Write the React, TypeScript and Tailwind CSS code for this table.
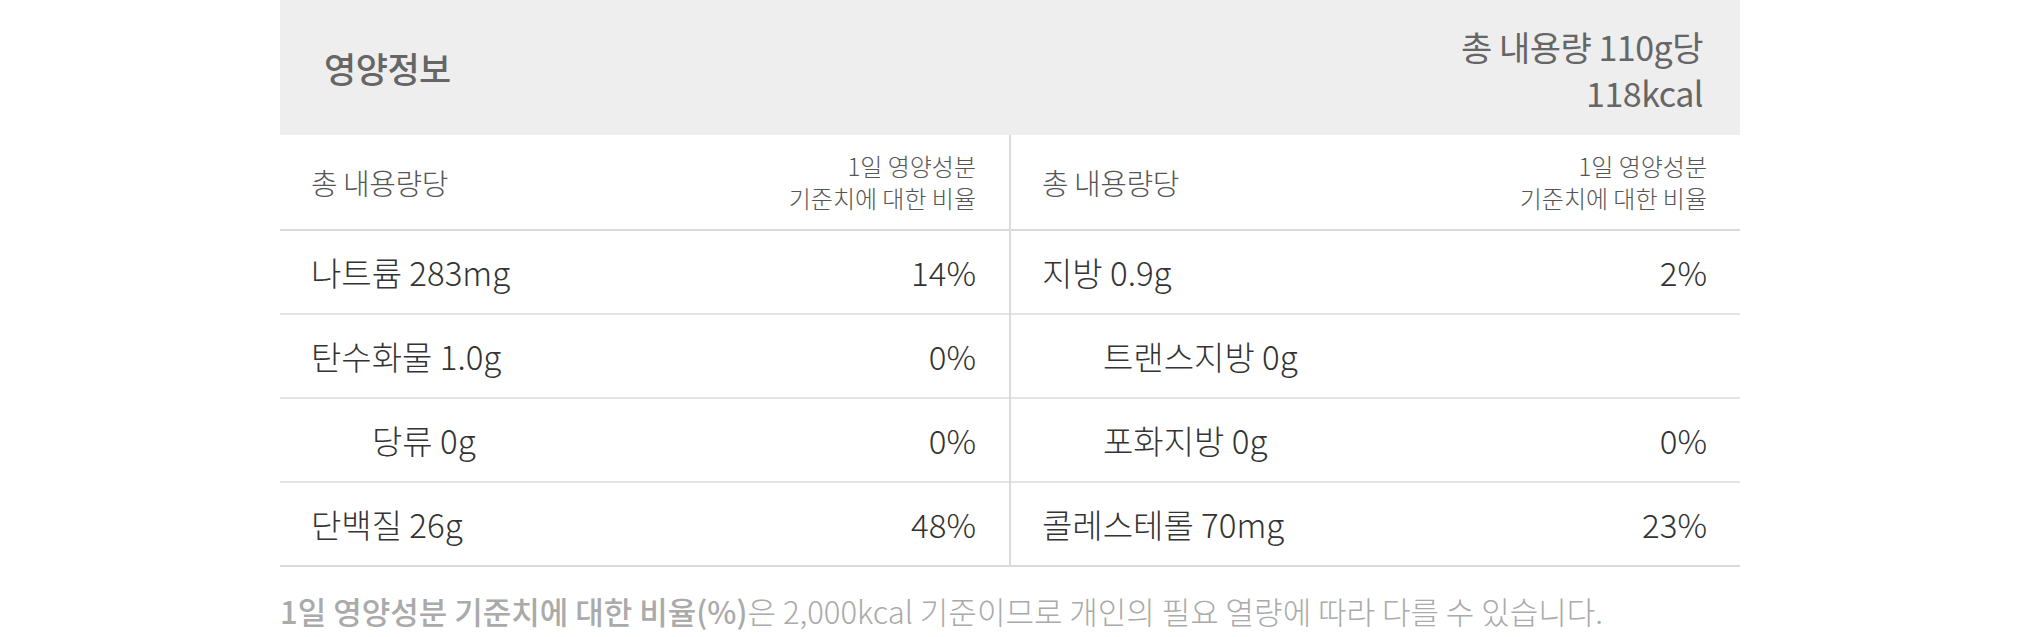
import React from "react";

type Row = { label: string; value: string; indent?: boolean };

const left: Row[] = [
  { label: "나트륨 283mg", value: "14%" },
  { label: "탄수화물 1.0g", value: "0%" },
  { label: "당류 0g", value: "0%", indent: true },
  { label: "단백질 26g", value: "48%" },
];

const right: Row[] = [
  { label: "지방 0.9g", value: "2%" },
  { label: "트랜스지방 0g", value: "", indent: true },
  { label: "포화지방 0g", value: "0%", indent: true },
  { label: "콜레스테롤 70mg", value: "23%" },
];

function Column({ rows, divider }: { rows: Row[]; divider?: boolean }) {
  return (
    <div className={divider ? "flex flex-col border-l-2 border-[#dcdcdc]" : "flex flex-col"}>
      <div className="h-[96px] flex items-center justify-between pl-[31px] pr-[33px] border-b-2 border-[#d9d9d9]">
        <span className="text-[29px] text-[#555] leading-none tracking-[-0.5px]">총 내용량당</span>
        <span className="text-[24px] text-[#555] leading-[32px] text-right">
          1일 영양성분
          <br />
          기준치에 대한 비율
        </span>
      </div>
      {rows.map((r, i) => (
        <div
          key={i}
          className={
            "h-[84px] flex items-center justify-between pr-[33px] border-b-2 " +
            (i === rows.length - 1 ? "border-[#d9d9d9] " : "border-[#e4e4e4] ") +
            (r.indent ? "pl-[92px]" : "pl-[31px]")
          }
        >
          <span className="text-[33px] text-[#333] leading-none">{r.label}</span>
          <span className="text-[33px] text-[#333] leading-none">{r.value}</span>
        </div>
      ))}
    </div>
  );
}

export default function App() {
  return (
    <div className="w-[2020px] h-[637px] bg-white font-['Noto_Sans_CJK_KR_Light','Noto_Sans_CJK_KR','Noto_Sans',sans-serif] overflow-hidden">
      <div className="ml-[280px] w-[1460px]">
        <div className="h-[135px] bg-[#eeeeee] flex items-center justify-between pl-[44px] pr-[37px] font-['Noto_Sans_CJK_KR','Noto_Sans',sans-serif]">
          <span className="text-[35px] font-medium text-[#666] leading-none tracking-[-0.5px]">영양정보</span>
          <div className="flex flex-col items-end text-[34px] font-normal text-[#666] leading-[46px] pt-[4px] tracking-[-0.5px]">
            <span>총 내용량 110g당</span>
            <span>118kcal</span>
          </div>
        </div>
        <div className="grid grid-cols-[729px_731px]">
          <Column rows={left} />
          <Column rows={right} divider />
        </div>
        <p className="mt-[25px] text-[31px] leading-[38px] text-[#aaa] whitespace-nowrap">
          <span className="font-['Noto_Sans_CJK_KR','Noto_Sans',sans-serif] font-medium">1일 영양성분 기준치에 대한 비율(%)</span>은 2,000kcal 기준이므로 개인의 필요 열량에 따라 다를 수 있습니다.
        </p>
      </div>
    </div>
  );
}
